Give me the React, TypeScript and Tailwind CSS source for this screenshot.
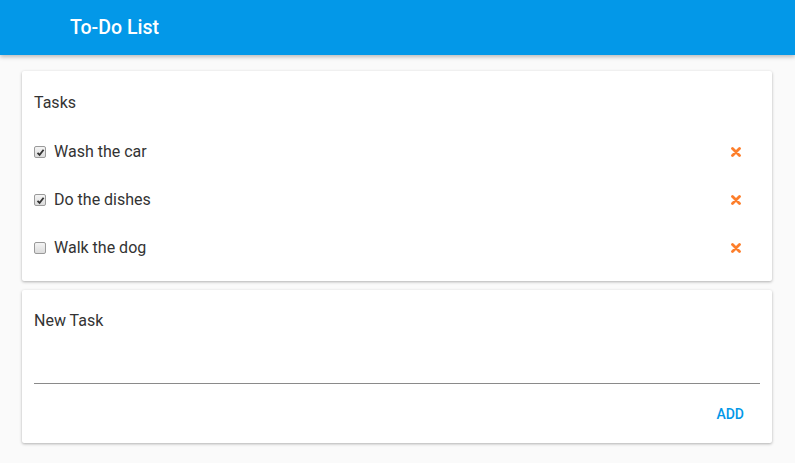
import { useState } from "react";

const initialTasks = [
  { id: 1, title: "Wash the car", done: true },
  { id: 2, title: "Do the dishes", done: true },
  { id: 3, title: "Walk the dog", done: false },
];

function Check({ checked, onChange }: { checked: boolean; onChange: () => void }) {
  return (
    <button
      onClick={onChange}
      className="w-[12px] h-[12px] mr-[8px] rounded-[2px] border border-[#9a9a9a] bg-gradient-to-b from-[#f4f4f4] to-[#dcdcdc] flex items-center justify-center"
    >
      {checked && (
        <svg width="9" height="9" viewBox="0 0 9 9">
          <path d="M1.5 4.8 L3.6 6.8 L7.6 1.8" fill="none" stroke="#333" strokeWidth="1.8" />
        </svg>
      )}
    </button>
  );
}

function RemoveIcon() {
  return (
    <svg width="10" height="10" viewBox="0 0 10 10">
      <path d="M1.5 1.5 L8.5 8.5 M8.5 1.5 L1.5 8.5" stroke="#fd7e2b" strokeWidth="2.8" strokeLinecap="round" />
    </svg>
  );
}

export default function App() {
  const [tasks, setTasks] = useState(initialTasks);

  return (
    <div className="min-h-[463px] w-full bg-[#fafafa] text-[#333] font-['Roboto',sans-serif]">
      <header className="h-[55px] bg-[#0398e8] flex items-center pl-[70px] shadow-[0_2px_4px_rgba(0,0,0,0.25)] relative">
        <h1 className="text-white text-[19.5px] font-medium">To-Do List</h1>
      </header>

      <main className="pl-[22px] pr-[23px] pt-[16px] flex flex-col gap-[9px] w-full">
        <section className="bg-white rounded-[2px] shadow-[0_1px_3px_rgba(0,0,0,0.3)] px-[12px] pt-[20px] pb-[9px]">
          <h2 className="text-[16px] leading-[24px] mb-[13px]">Tasks</h2>
          <ul>
            {tasks.map((t) => (
              <li key={t.id} className="h-[48px] flex items-center">
                <Check
                  checked={t.done}
                  onChange={() =>
                    setTasks(tasks.map((x) => (x.id === t.id ? { ...x, done: !x.done } : x)))
                  }
                />
                <span className="text-[16px] flex-1">{t.title}</span>
                <button
                  className="mr-[19px] flex items-center"
                  onClick={() => setTasks(tasks.filter((x) => x.id !== t.id))}
                >
                  <RemoveIcon />
                </button>
              </li>
            ))}
          </ul>
        </section>

        <section className="bg-white rounded-[2px] shadow-[0_1px_3px_rgba(0,0,0,0.3)] px-[12px] pt-[19px] pb-[15px]">
          <label className="block text-[16px] leading-[24px]">New Task</label>
          <input
            type="text"
            className="block w-full h-[38px] mt-[13px] border-b border-[#8a8a8a] outline-none bg-transparent"
          />
          <div className="flex justify-end mt-[16px]">
            <button className="text-[#0398e8] text-[14px] font-medium mr-[16px] leading-[28px]">
              ADD
            </button>
          </div>
        </section>
      </main>
    </div>
  );
}
